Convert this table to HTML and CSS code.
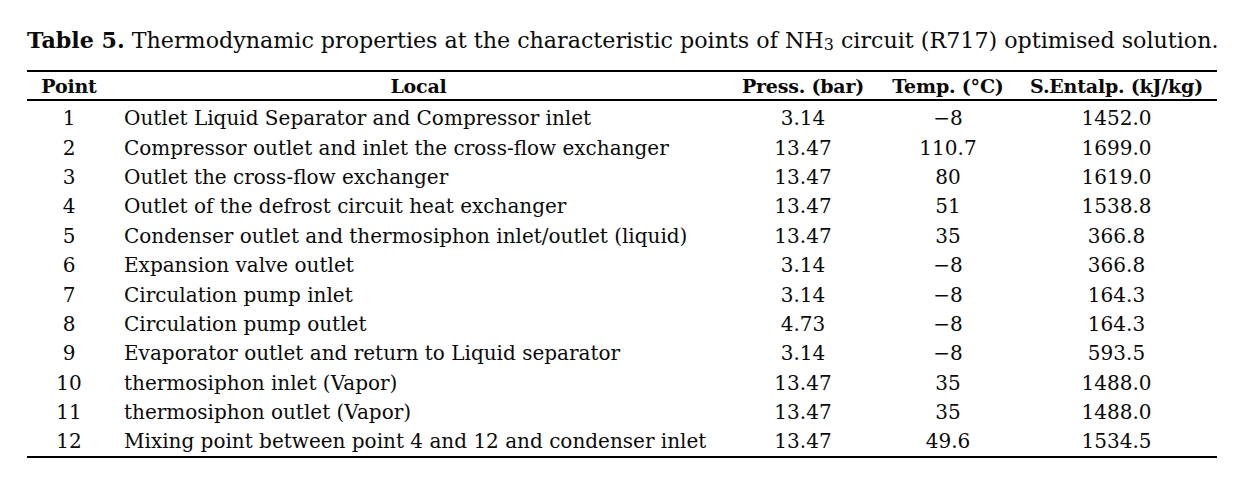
FILE: index.html
```html
<!DOCTYPE html>
<html lang="en">
<head>
<meta charset="utf-8">
<title>Table 5</title>
<link rel="stylesheet" href="styles.css">
</head>
<body>
<div class="page">
  <p class="caption"><b>Table 5.</b> Thermodynamic properties at the characteristic points of NH<sub>3</sub> circuit (R717) optimised solution.</p>
  <table class="data">
    <colgroup>
      <col class="c-point"><col class="c-local"><col class="c-press"><col class="c-temp"><col class="c-ent">
    </colgroup>
    <thead>
      <tr><th>Point</th><th>Local</th><th>Press. (bar)</th><th>Temp. (°C)</th><th>S.Entalp. (kJ/kg)</th></tr>
    </thead>
    <tbody>
      <tr><td>1</td><td class="local">Outlet Liquid Separator and Compressor inlet</td><td>3.14</td><td>−8</td><td>1452.0</td></tr>
      <tr><td>2</td><td class="local">Compressor outlet and inlet the cross-flow exchanger</td><td>13.47</td><td>110.7</td><td>1699.0</td></tr>
      <tr><td>3</td><td class="local">Outlet the cross-flow exchanger</td><td>13.47</td><td>80</td><td>1619.0</td></tr>
      <tr><td>4</td><td class="local">Outlet of the defrost circuit heat exchanger</td><td>13.47</td><td>51</td><td>1538.8</td></tr>
      <tr><td>5</td><td class="local">Condenser outlet and thermosiphon inlet/outlet (liquid)</td><td>13.47</td><td>35</td><td>366.8</td></tr>
      <tr><td>6</td><td class="local">Expansion valve outlet</td><td>3.14</td><td>−8</td><td>366.8</td></tr>
      <tr><td>7</td><td class="local">Circulation pump inlet</td><td>3.14</td><td>−8</td><td>164.3</td></tr>
      <tr><td>8</td><td class="local">Circulation pump outlet</td><td>4.73</td><td>−8</td><td>164.3</td></tr>
      <tr><td>9</td><td class="local">Evaporator outlet and return to Liquid separator</td><td>3.14</td><td>−8</td><td>593.5</td></tr>
      <tr><td>10</td><td class="local">thermosiphon inlet (Vapor)</td><td>13.47</td><td>35</td><td>1488.0</td></tr>
      <tr><td>11</td><td class="local">thermosiphon outlet (Vapor)</td><td>13.47</td><td>35</td><td>1488.0</td></tr>
      <tr><td>12</td><td class="local">Mixing point between point 4 and 12 and condenser inlet</td><td>13.47</td><td>49.6</td><td>1534.5</td></tr>
    </tbody>
  </table>
</div>
</body>
</html>
```
FILE: styles.css
```css
html, body {
  margin: 0;
  padding: 0;
  background: #ffffff;
}
body {
  font-family: "DejaVu Serif", "Liberation Serif", serif;
  color: #0a0a0a;
}
.page {
  padding: 24px 0 0 27px;
  width: 1190px;
}
.caption {
  margin: 0 0 14px 0;
  font-size: 22.2px;
  line-height: 32px;
  white-space: nowrap;
}
.caption b {
  font-weight: 700;
}
.caption sub {
  font-size: 0.72em;
  vertical-align: -0.12em;
  line-height: 0;
}
.data {
  width: 1190px;
  border-collapse: collapse;
  table-layout: fixed;
  border-top: 2px solid #000;
  border-bottom: 2px solid #000;
  font-size: 20px;
}
.c-point { width: 84px; }
.c-local { width: 615px; }
.c-press { width: 154px; }
.c-temp { width: 136px; }
.c-ent { width: 201px; }
.data th {
  font-weight: 700;
  font-size: 19px;
  letter-spacing: -0.2px;
  height: 26px;
  padding: 1px 0 0 0;
  text-align: center;
  white-space: nowrap;
  border-bottom: 2px solid #000;
}
.data td {
  height: 27.4px;
  padding: 2px 0 0 0;
  text-align: center;
  white-space: nowrap;
  line-height: 27px;
}
.data tbody tr:first-child td {
  padding-top: 4px;
}
.data td.local {
  text-align: left;
  padding-left: 13px;
}
```
